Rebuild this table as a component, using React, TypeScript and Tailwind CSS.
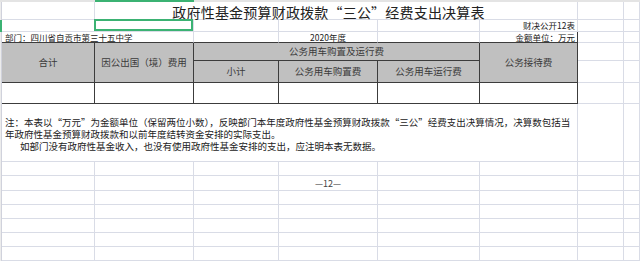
import React from "react";

const L = "border-r border-b border-[#d9dce6]";
const D = "border-r border-b border-[#3c3c3c]";
const HDR = "bg-[#c0c0c0] flex items-center justify-center text-[9.5px] leading-none text-[#3a3a3a] whitespace-nowrap";

export default function App() {
  const font = { fontFamily: "'Noto Sans CJK SC', 'Noto Sans', sans-serif" };
  return (
    <div className="w-[640px] h-[263px] overflow-hidden bg-white" style={font}>
      <div className="grid grid-cols-[2px_93px_99px_85px_99px_102px_98px_46px_16px] grid-rows-[2px_18px_12px_11px_18px_22px_21px_58px_14px_15px_14px_14px_14px_14px_14px]">
        {/* row 1: column header edge */}
        <div className="row-start-1 col-start-1 col-span-2 bg-[#e4e4e4]" />
        <div className="row-start-1 col-start-3 bg-[#3bb273]" />
        <div className="row-start-1 col-start-4 col-span-6 bg-[#e4e4e4]" />

        {/* col 1: row header edge */}
        <div className="row-start-2 col-start-1 bg-[#ececec] border-r border-[#d0d2dc]" />
        <div className="row-start-3 col-start-1 bg-[#3bb273]" />
        <div className="row-start-4 col-start-1 row-span-12 bg-[#ececec] border-r border-[#d0d2dc]" />

        {/* row 2: title */}
        <div className={`row-start-2 col-start-2 ${L}`} />
        <div className={`row-start-2 col-start-3 col-span-5 ${L} flex items-center justify-center pr-[15px] pt-[2px] text-[14px] leading-none text-[#222] whitespace-nowrap tracking-[0.2px]`}>
          政府性基金预算财政拨款“三公”经费支出决算表
        </div>
        <div className={`row-start-2 col-start-8 ${L}`} />
        <div className={`row-start-2 col-start-9 ${L}`} />

        {/* row 3 */}
        <div className={`row-start-3 col-start-2 ${L}`} />
        <div className={`row-start-3 col-start-3 ${L} relative`}>
          <div className="absolute -left-px -top-px right-0 bottom-0 border-2 border-[#3bb273]" />
        </div>
        <div className={`row-start-3 col-start-4 ${L}`} />
        <div className={`row-start-3 col-start-5 ${L}`} />
        <div className={`row-start-3 col-start-6 ${L}`} />
        <div className={`row-start-3 col-start-7 ${L} flex items-center justify-end pr-[2px] text-[8.5px] leading-none text-[#222] whitespace-nowrap`}>
          财决公开12表
        </div>
        <div className={`row-start-3 col-start-8 ${L}`} />
        <div className={`row-start-3 col-start-9 ${L}`} />

        {/* row 4 */}
        <div className="row-start-4 col-start-2 col-span-2 border-r border-r-[#d9dce6] border-b border-b-[#3c3c3c] flex items-center pl-[3px] text-[8.5px] leading-none text-[#222] whitespace-nowrap">
          部门：四川省自贡市第三十五中学
        </div>
        <div className="row-start-4 col-start-4 border-r border-r-[#d9dce6] border-b border-b-[#3c3c3c]" />
        <div className="row-start-4 col-start-5 border-r border-r-[#d9dce6] border-b border-b-[#3c3c3c] flex items-center justify-center text-[8.5px] leading-none text-[#222] whitespace-nowrap">
          2020年度
        </div>
        <div className="row-start-4 col-start-6 border-r border-r-[#d9dce6] border-b border-b-[#3c3c3c]" />
        <div className="row-start-4 col-start-7 border-r border-r-[#3c3c3c] border-b border-b-[#3c3c3c] flex items-center justify-end pr-[2px] text-[8.5px] leading-none text-[#222] whitespace-nowrap">
          金额单位：万元
        </div>
        <div className={`row-start-4 col-start-8 ${L}`} />
        <div className={`row-start-4 col-start-9 ${L}`} />

        {/* table header */}
        <div className={`row-start-5 row-span-2 col-start-2 ${D} ${HDR}`}>合计</div>
        <div className={`row-start-5 row-span-2 col-start-3 ${D} ${HDR}`}>因公出国（境）费用</div>
        <div className={`row-start-5 col-start-4 col-span-3 ${D} ${HDR}`}>公务用车购置及运行费</div>
        <div className={`row-start-6 col-start-4 ${D} ${HDR}`}>小计</div>
        <div className={`row-start-6 col-start-5 ${D} ${HDR}`}>公务用车购置费</div>
        <div className={`row-start-6 col-start-6 ${D} ${HDR}`}>公务用车运行费</div>
        <div className={`row-start-5 row-span-2 col-start-7 ${D} ${HDR}`}>公务接待费</div>
        <div className={`row-start-5 col-start-8 ${L}`} />
        <div className={`row-start-5 col-start-9 ${L}`} />
        <div className={`row-start-6 col-start-8 ${L}`} />
        <div className={`row-start-6 col-start-9 ${L}`} />

        {/* data row */}
        <div className={`row-start-7 col-start-2 ${D}`} />
        <div className={`row-start-7 col-start-3 ${D}`} />
        <div className={`row-start-7 col-start-4 ${D}`} />
        <div className={`row-start-7 col-start-5 ${D}`} />
        <div className={`row-start-7 col-start-6 ${D}`} />
        <div className={`row-start-7 col-start-7 ${D}`} />
        <div className={`row-start-7 col-start-8 ${L}`} />
        <div className={`row-start-7 col-start-9 ${L}`} />

        {/* notes */}
        <div className={`row-start-8 col-start-2 col-span-6 ${L} flex flex-col pt-[12px] pl-[3px] text-[9.5px] leading-[12px] text-[#222] whitespace-nowrap`}>
          <div>注：本表以“万元”为金额单位（保留两位小数），反映部门本年度政府性基金预算财政拨款“三公”经费支出决算情况，决算数包括当</div>
          <div>年政府性基金预算财政拨款和以前年度结转资金安排的实际支出。</div>
          <div className="pl-[15px]">如部门没有政府性基金收入，也没有使用政府性基金安排的支出，应注明本表无数据。</div>
        </div>
        <div className={`row-start-8 col-start-8 ${L}`} />
        <div className={`row-start-8 col-start-9 ${L}`} />

        {/* empty rows */}
        {[9, 10, 11, 12, 13, 14, 15].map((r) => (
          <React.Fragment key={r}>
            <div className={`${L}`} style={{ gridRow: r, gridColumn: 2 }} />
            <div className={`${L}`} style={{ gridRow: r, gridColumn: 3 }} />
            <div className={`${L}`} style={{ gridRow: r, gridColumn: 4 }} />
            <div
              className={`${L} flex items-center justify-center text-[9px] leading-none text-[#444] whitespace-nowrap`}
              style={{ gridRow: r, gridColumn: 5 }}
            >
              {r === 10 ? "—12—" : null}
            </div>
            <div className={`${L}`} style={{ gridRow: r, gridColumn: 6 }} />
            <div className={`${L}`} style={{ gridRow: r, gridColumn: 7 }} />
            <div className={`${L}`} style={{ gridRow: r, gridColumn: 8 }} />
            <div className={`${L}`} style={{ gridRow: r, gridColumn: 9 }} />
          </React.Fragment>
        ))}
      </div>
    </div>
  );
}
